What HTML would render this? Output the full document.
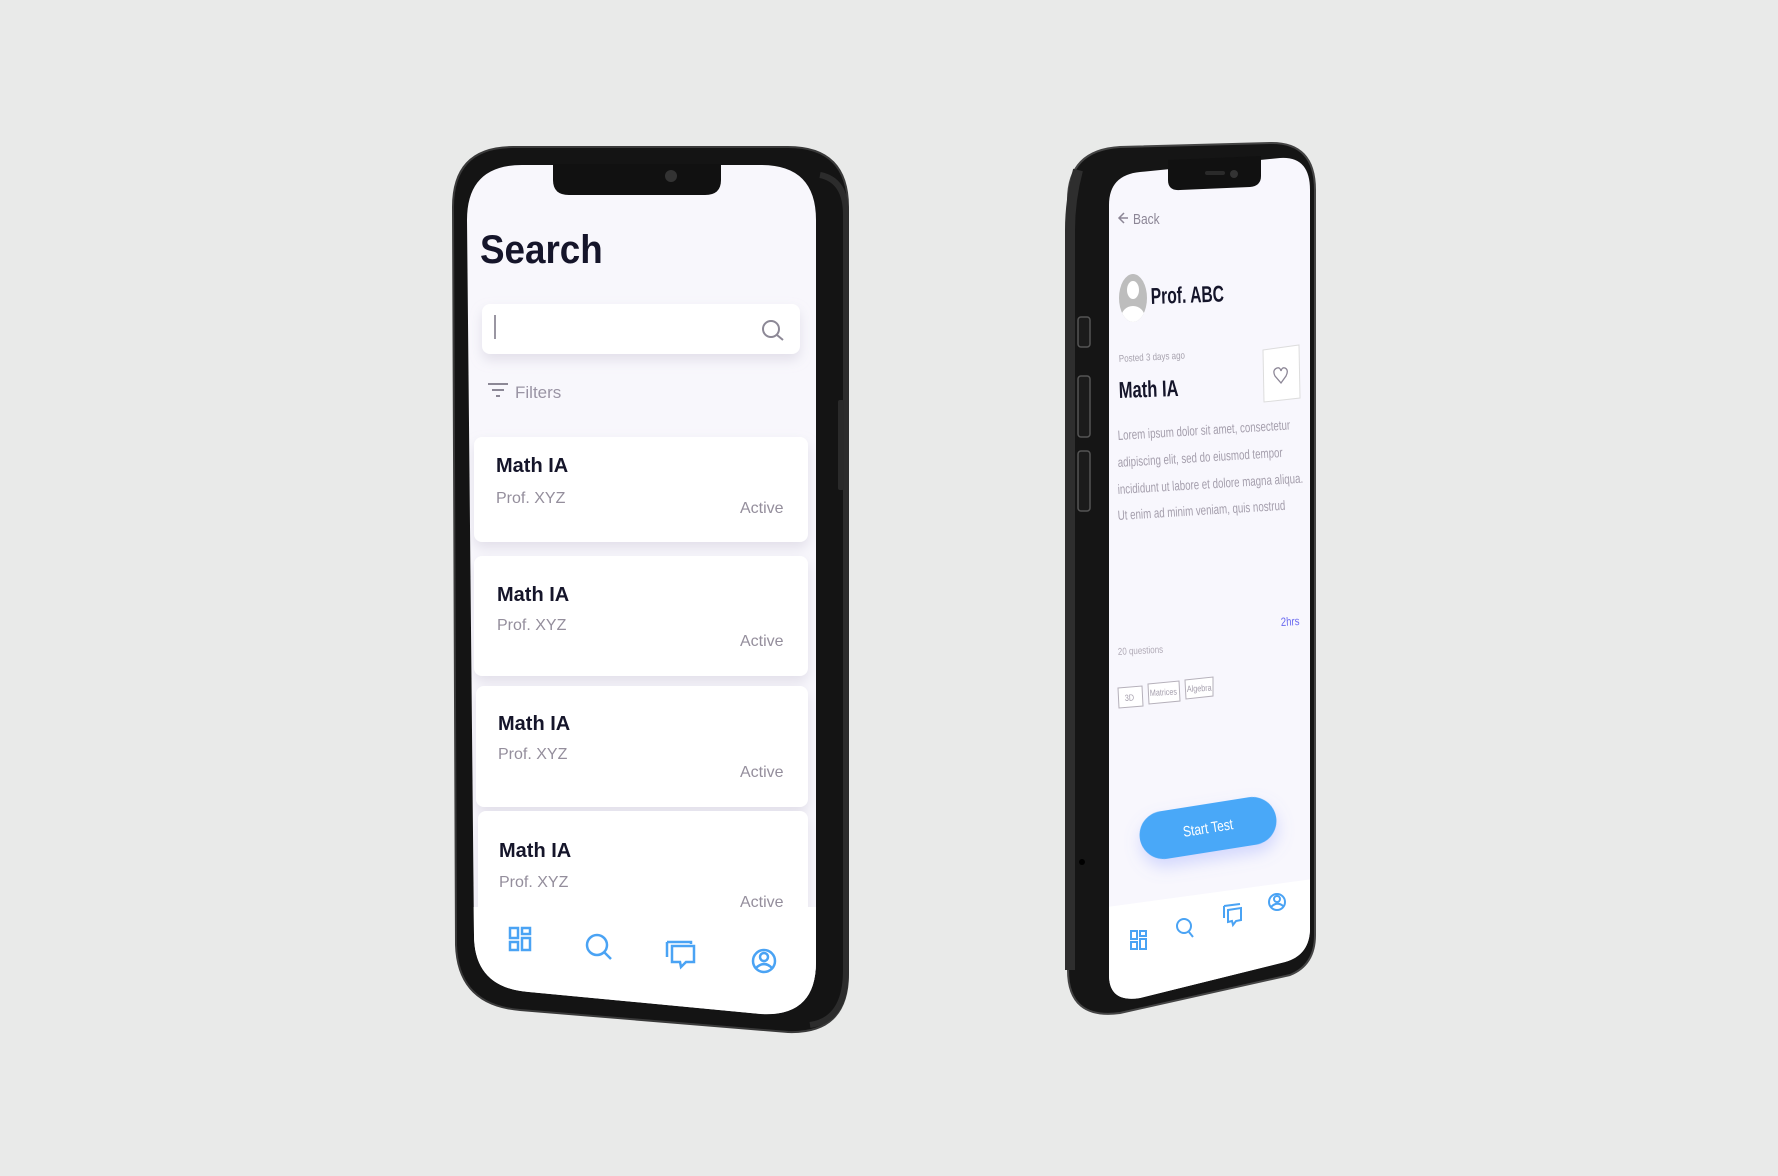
<!DOCTYPE html>
<html><head><meta charset="utf-8"><style>
html,body{margin:0;padding:0;background:#e9eae9;}
svg{display:block}
text{font-family:"Liberation Sans",sans-serif}
</style></head><body>
<svg width="1778" height="1176" viewBox="0 0 1778 1176" xmlns="http://www.w3.org/2000/svg">
<defs>
<clipPath id="ls"><path d="M522,165 L761,165 Q816,165 816,220 L816,962 Q816,1017 761,1014 L529,992 Q474,988 474,935 L467,220 Q467,165 522,165 Z"/></clipPath>
<clipPath id="rs"><path d="M1140,172 L1280,158 Q1310,156 1310,190 L1310,928 Q1310,955 1285,962 L1140,998 Q1109,1003 1109,975 L1109,205 Q1109,175 1140,172 Z"/></clipPath>
<clipPath id="av"><ellipse cx="1133" cy="298" rx="14" ry="24"/></clipPath>
<filter id="sh" x="-10%" y="-20%" width="120%" height="160%"><feDropShadow dx="0" dy="6" stdDeviation="6" flood-color="#b8b4c8" flood-opacity="0.35"/></filter>
<filter id="bs" x="-20%" y="-40%" width="140%" height="200%"><feDropShadow dx="0" dy="8" stdDeviation="8" flood-color="#7b8cff" flood-opacity="0.3"/></filter>
</defs>
<rect width="1778" height="1176" fill="#e9eae9"/>

<!-- LEFT PHONE -->
<path d="M513,147 L788,147 Q848,147 848,207 L848,974 Q848,1034 788,1032 L520,1010 Q458,1005 456,945 L453,207 Q453,147 513,147 Z" fill="#141414" stroke="#3a3a3a" stroke-width="2"/>
<path d="M820,175 Q846,180 846,215 L846,970 Q846,1020 810,1025" fill="none" stroke="#2c2c2c" stroke-width="6"/>
<rect x="838" y="400" width="6" height="90" rx="2" fill="#2a2a2a"/>
<g clip-path="url(#ls)">
<rect x="460" y="160" width="360" height="870" fill="#f8f7fc"/>
<text x="480" y="263" font-size="40" font-weight="bold" fill="#15152a" transform="translate(480,0) scale(0.92,1) translate(-480,0)">Search</text>
<rect x="482" y="304" width="318" height="50" rx="8" fill="#ffffff" filter="url(#sh)"/>
<rect x="494" y="315" width="2" height="24" fill="#9a96a2"/>
<circle cx="771" cy="329" r="8" fill="none" stroke="#8c8896" stroke-width="2"/>
<line x1="777" y1="335" x2="783" y2="340" stroke="#8c8896" stroke-width="2"/>
<line x1="488" y1="384" x2="508" y2="384" stroke="#8c8896" stroke-width="2"/>
<line x1="492" y1="390" x2="504" y2="390" stroke="#8c8896" stroke-width="2"/>
<line x1="496" y1="396" x2="500" y2="396" stroke="#8c8896" stroke-width="2"/>
<text x="515" y="398" font-size="17" fill="#9a94a4">Filters</text>

<g filter="url(#sh)">
<rect x="474" y="437" width="334" height="105" rx="8" fill="#fff"/>
<rect x="474" y="556" width="334" height="120" rx="8" fill="#fff"/>
<rect x="476" y="686" width="332" height="121" rx="8" fill="#fff"/>
<rect x="478" y="811" width="330" height="110" rx="8" fill="#fff"/>
</g>
<g font-size="20" font-weight="bold" fill="#15152a">
<text x="496" y="472">Math  IA</text>
<text x="497" y="601">Math  IA</text>
<text x="498" y="730">Math  IA</text>
<text x="499" y="857">Math  IA</text>
</g>
<g font-size="16" fill="#948e9c">
<text x="496" y="503">Prof. XYZ</text>
<text x="497" y="630">Prof. XYZ</text>
<text x="498" y="759">Prof. XYZ</text>
<text x="499" y="887">Prof. XYZ</text>
<text x="740" y="513">Active</text>
<text x="740" y="646">Active</text>
<text x="740" y="777">Active</text>
<text x="740" y="907">Active</text>
</g>
<rect x="460" y="907" width="360" height="130" fill="#ffffff"/>
<g fill="none" stroke="#4aa3f4" stroke-width="2.5">
<rect x="510" y="928" width="8" height="10"/><rect x="522" y="928" width="8" height="6"/>
<rect x="510" y="942" width="8" height="8"/><rect x="522" y="938" width="8" height="12"/>
<circle cx="597" cy="945" r="10"/><line x1="604" y1="952" x2="611" y2="959"/>
<path d="M667,942 L667,957 M667,942 L691,942 L691,944"/>
<path d="M672,946 L694,946 L694,962 L686,962 L681,967 L680,962 L672,962 Z"/>
<circle cx="764" cy="961" r="11"/><circle cx="764" cy="957" r="4"/><path d="M756,968 Q764,960 772,968"/>
</g>
</g>
<path d="M553,164 L721,164 L721,180 Q721,195 705,195 L569,195 Q553,195 553,180 Z" fill="#111"/>
<circle cx="671" cy="176" r="6" fill="#333"/>

<!-- RIGHT PHONE -->
<path d="M1120,147 L1270,143 Q1315,142 1315,190 L1315,935 Q1315,965 1290,975 L1120,1013 Q1068,1020 1068,970 L1068,200 Q1068,150 1120,147 Z" fill="#151515" stroke="#444" stroke-width="2"/>
<path d="M1078,170 Q1070,200 1070,230 L1070,970" fill="none" stroke="#2e2e2e" stroke-width="10"/>
<rect x="1078" y="317" width="12" height="30" rx="3" fill="#1b1b1b" stroke="#555" stroke-width="1.5"/>
<rect x="1078" y="376" width="12" height="61" rx="3" fill="#1b1b1b" stroke="#555" stroke-width="1.5"/>
<rect x="1078" y="451" width="12" height="60" rx="3" fill="#1b1b1b" stroke="#555" stroke-width="1.5"/>
<circle cx="1082" cy="862" r="3" fill="#000"/>
<g clip-path="url(#rs)">
<rect x="1100" y="150" width="220" height="860" fill="#f8f7fd"/>
<path d="M1128,218 L1120,218 M1124,213 L1119,218 L1124,223" fill="none" stroke="#8c8696" stroke-width="1.5"/>
<text transform="translate(1133,224) scale(0.8,1)" font-size="15" fill="#8c8696">Back</text>
<g clip-path="url(#av)">
<rect x="1115" y="270" width="40" height="60" fill="#bdbdbd"/>
<ellipse cx="1133" cy="290" rx="6" ry="9" fill="#fff"/>
<ellipse cx="1133" cy="318" rx="12" ry="12" fill="#fff"/>
</g>
<text transform="translate(1151,304) rotate(-2) scale(0.68,1)" font-size="23" font-weight="bold" fill="#15152a">Prof. ABC</text>
<text transform="translate(1119,362) rotate(-3) scale(0.8,1)" font-size="10" fill="#a7a2ae">Posted 3 days ago</text>
<path d="M1263,350 L1299,345 L1300,398 L1264,402 Z" fill="#fff" stroke="#ddd" stroke-width="1"/>
<path d="M1281,383 L1275,376 Q1272,370 1277,368 Q1280,367 1281,371 Q1282,367 1285,368 Q1289,370 1286,376 Z" fill="none" stroke="#8c8696" stroke-width="1.3"/>
<text transform="translate(1119,398) rotate(-2) scale(0.72,1)" font-size="23" font-weight="bold" fill="#15152a">Math IA</text>
<g font-size="13.5" fill="#a49eac">
<text transform="translate(1118,440) rotate(-3.5) scale(0.72,1)">Lorem ipsum dolor sit amet, consectetur</text>
<text transform="translate(1118,467) rotate(-3.5) scale(0.72,1)">adipiscing elit, sed do eiusmod tempor</text>
<text transform="translate(1118,494) rotate(-3.5) scale(0.72,1)">incididunt ut labore et dolore magna aliqua.</text>
<text transform="translate(1118,520) rotate(-3.5) scale(0.72,1)">Ut enim ad minim veniam, quis nostrud</text>
</g>
<text transform="translate(1281,626) rotate(-3) scale(0.8,1)" font-size="12" fill="#6a6af0">2hrs</text>
<text transform="translate(1118,655) rotate(-3) scale(0.8,1)" font-size="10" fill="#b0aab6">20 questions</text>
<g fill="#fff" stroke="#b5b0ba" stroke-width="1">
<path d="M1118,688 L1142,686 L1143,706 L1119,708 Z"/>
<path d="M1148,684 L1179,681 L1180,701 L1149,704 Z"/>
<path d="M1185,680 L1213,677 L1213,696 L1186,699 Z"/>
</g>
<g font-size="9" fill="#a49eac">
<text transform="translate(1125,701) rotate(-3) scale(0.8,1)">3D</text>
<text transform="translate(1150,696) rotate(-3) scale(0.8,1)">Matrices</text>
<text transform="translate(1187,692) rotate(-3) scale(0.8,1)">Algebra</text>
</g>
<g transform="translate(1208,828) rotate(-9)">
<rect x="-69" y="-24" width="138" height="48" rx="24" fill="#4aa8f8" filter="url(#bs)"/>
<text x="0" y="5" text-anchor="middle" font-size="15" fill="#fff" transform="scale(0.8,1)">Start Test</text>
</g>
<path d="M1100,908 L1320,878 L1320,1010 L1100,1010 Z" fill="#ffffff"/>
<g fill="none" stroke="#4aa3f4" stroke-width="2">
<rect x="1131" y="931" width="6" height="8"/><rect x="1140" y="931" width="6" height="5"/>
<rect x="1131" y="942" width="6" height="7"/><rect x="1140" y="939" width="6" height="10"/>
<circle cx="1184" cy="926" r="7"/><line x1="1189" y1="932" x2="1193" y2="937"/>
<path d="M1224,906 L1224,918 M1224,906 L1240,904"/>
<path d="M1228,910 L1241,908 L1241,920 L1236,921 L1233,925 L1232,921 L1228,922 Z"/>
<circle cx="1277" cy="902" r="8"/><circle cx="1277" cy="899" r="3"/><path d="M1271,907 Q1277,901 1283,906"/>
</g>
</g>
<path d="M1168,160 L1261,156 L1261,176 Q1261,186 1250,187 L1180,190 Q1168,191 1168,180 Z" fill="#111"/>
<circle cx="1234" cy="174" r="4" fill="#333"/>
<rect x="1205" y="171" width="20" height="4" rx="2" fill="#2a2a2a"/>
</svg>
</body></html>
